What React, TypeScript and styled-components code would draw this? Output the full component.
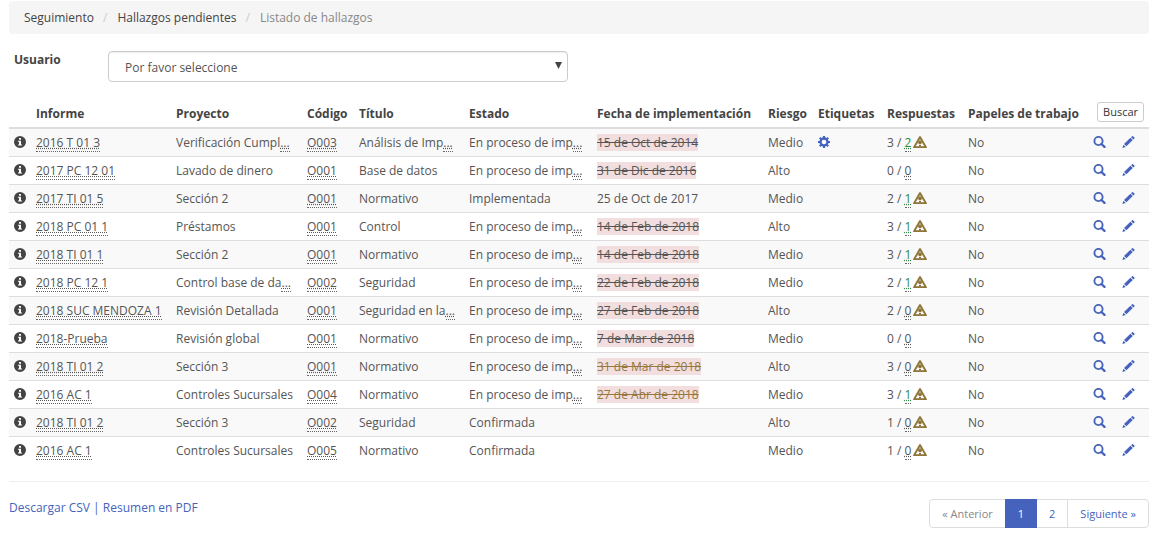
import React from 'react';
import styled, { createGlobalStyle } from 'styled-components';

const color = {
  text: '#555555',
  strong: '#444444',
  link: '#4563bc',
  line: '#dddddd',
  muted: '#888888',
  green: '#2b8a3e',
  warn: '#8d7437',
};

const GlobalStyle = createGlobalStyle`
  *, *::before, *::after { box-sizing: border-box; }
  body {
    margin: 0;
    background: #fff;
    color: ${color.text};
    font: 12px/18px 'Open Sans', 'Noto Sans', sans-serif;
  }
`;

const Page = styled.div`
  padding: 1px 8px 8px 9px;
`;

const Breadcrumb = styled.ol`
  display: flex;
  margin: 0 0 17px;
  padding: 8px 15px 7px;
  list-style: none;
  background: #f5f5f5;
  border-radius: 4px;
`;

const Crumb = styled.li<{ $current?: boolean }>`
  color: ${(p) => (p.$current ? color.muted : color.strong)};

  &:not(:first-child)::before {
    content: '/';
    padding: 0 10px 0 9px;
    color: #cccccc;
  }
`;

const CrumbLink = styled.a`
  color: inherit;
  text-decoration: none;
`;

const Filter = styled.form`
  display: grid;
  grid-template-columns: 94px minmax(200px, 460px);
  align-items: start;
  margin-bottom: 15px;
  padding-left: 5px;
`;

const FilterLabel = styled.label`
  color: ${color.strong};
  font-weight: 700;
`;

const SelectBox = styled.div`
  display: grid;
  align-items: center;

  & > * { grid-area: 1 / 1; }
  & > svg {
    justify-self: end;
    margin-right: 6px;
    margin-bottom: 2px;
    pointer-events: none;
  }
`;

const Select = styled.select`
  appearance: none;
  width: 100%;
  height: 31px;
  padding: 3px 16px 0;
  border: 1px solid #cccccc;
  border-radius: 4px;
  background: #fff;
  color: ${color.text};
  font: inherit;
  box-shadow: inset 0 1px 1px rgba(0, 0, 0, 0.07);
`;

const Table = styled.table`
  width: 100%;
  table-layout: fixed;
  border-collapse: separate;
  border-spacing: 0;
`;

const Head = styled.th`
  height: 32px;
  padding: 5px 0 4px 5px;
  border-bottom: 2px solid ${color.line};
  color: ${color.strong};
  font-weight: 700;
  text-align: left;
  vertical-align: bottom;
  white-space: nowrap;
`;

const ActionHead = styled(Head)`
  padding: 5px 5px 5px 0;
  text-align: right;
`;

const Row = styled.tr`
  &:nth-child(odd) { background: #f9f9f9; }
  &:last-child > td { border-bottom: 0; }
`;

const Cell = styled.td`
  height: 28px;
  padding: 5px 0 4px 5px;
  border-bottom: 1px solid ${color.line};
  vertical-align: top;
  white-space: nowrap;
`;

const Abbr = styled.abbr<{ $good?: boolean }>`
  color: ${(p) => (p.$good ? color.green : 'inherit')};
  border-bottom: 1px dotted #666666;
  text-decoration: underline dotted;
  cursor: help;
`;

const Overdue = styled.del<{ $warn?: boolean }>`
  background: #f2dede;
  color: ${(p) => (p.$warn ? '#967840' : color.text)};
`;

const SearchButton = styled.button`
  display: block;
  height: 20px;
  margin-left: auto;
  padding: 0 5px;
  border: 1px solid #cccccc;
  border-radius: 3px;
  background: #fff;
  color: #333333;
  font: 11px/16px 'Open Sans', 'Noto Sans', sans-serif;
`;

const IconLink = styled.a<{ $tone?: string }>`
  color: ${(p) => p.$tone || color.link};
`;

const Icon = styled.svg`
  display: inline-block;
  vertical-align: -1px;
  fill: currentColor;
`;

const WarningSvg = styled(Icon)`
  margin-left: 2px;
  color: ${color.warn};
`;

const Footer = styled.footer`
  display: flex;
  justify-content: space-between;
  align-items: flex-start;
  margin-top: 16px;
  padding-top: 17px;
  border-top: 1px solid #eeeeee;
  color: ${color.link};
`;

const TextLink = styled.a`
  color: ${color.link};
  text-decoration: none;
`;

const Pagination = styled.ul`
  display: flex;
  margin: 0;
  padding: 0;
  list-style: none;
  border: 1px solid ${color.line};
  border-radius: 4px;
  font-size: 11px;
`;

const PageItem = styled.li<{ $divided?: boolean }>`
  border-left: ${(p) => (p.$divided ? `1px solid ${color.line}` : '0')};
`;

const PageLink = styled.a<{ $active?: boolean; $disabled?: boolean }>`
  display: block;
  margin: ${(p) => (p.$active ? '-1px 0' : '0')};
  padding: ${(p) => (p.$active ? '6px 13px 5px' : '5px 12px 4px')};
  background: ${(p) => (p.$active ? color.link : 'transparent')};
  color: ${(p) => (p.$active ? '#fff' : p.$disabled ? color.muted : color.link)};
  text-decoration: none;
`;

const InfoIcon = () => (
  <Icon width="12" height="12" viewBox="0 0 12 12" aria-hidden="true">
    <path fillRule="evenodd" d="M6 0a6 6 0 1 1 0 12A6 6 0 0 1 6 0ZM5 2v1.7h2V2ZM4 4.7v1h1v2.8H4v1h4v-1H7V4.7Z" />
  </Icon>
);

const SearchIcon = () => (
  <Icon width="13" height="12" viewBox="0 0 13 12" aria-hidden="true">
    <circle cx="5.5" cy="5" r="4.1" fill="none" stroke="currentColor" strokeWidth="1.9" />
    <path d="m8.4 8 3.1 2.900" fill="none" stroke="currentColor" strokeWidth="2.300" strokeLinecap="round" />
  </Icon>
);

const PencilIcon = () => (
  <Icon width="13" height="12" viewBox="0 0 13 12" aria-hidden="true">
    <path d="m.4 12 1-3.300 2.300 2.200ZM2 8l6.400-6.200 2.400 2.300L4.400 10.300ZM9.100 1.200 10 .3q.5-.5 1 0l1.400 1.300q.5.5 0 1l-.9.900Z" />
  </Icon>
);

const CogIcon = () => (
  <Icon width="12" height="12" viewBox="0 0 12 12" aria-hidden="true">
    <circle cx="6" cy="6" r="3.5" fill="none" stroke="currentColor" strokeWidth="2.3" />
    {[0, 45, 90, 135].map((angle) => (
      <path key={angle} transform={`rotate(${angle} 6 6)`} d="M4.9 0h2.2v2.2H4.9ZM4.9 9.8h2.2V12H4.9Z" />
    ))}
  </Icon>
);

const WarningIcon = () => (
  <WarningSvg width="14" height="12" viewBox="0 0 14 12" role="img" aria-label="Advertencia">
    <path fillRule="evenodd" d="M7 0q.5 0 .8.6L14 11.3q0 .7-.6.7H.6q-.6 0-.6-.7L6.2.6Q6.5 0 7 0ZM7 2.900 2.700 10.200H11.300Z" />
    <path d="M5.700 4.500h2.600L9 7 7.800 8.200H6.200L5 7ZM6 9h2v1.600H6Z" />
  </WarningSvg>
);

const columnWidths = [22, 140, 131, 52, 110, 128, 171, 50, 69, 81, 125, 29, 32];
const headings = [
  'Informe', 'Proyecto', 'Código', 'Título', 'Estado', 'Fecha de implementación',
  'Riesgo', 'Etiquetas', 'Respuestas', 'Papeles de trabajo',
];

type Finding = {
  report: string;
  project: string;
  code: string;
  title: string;
  state: string;
  date?: string;
  dateKind?: 'late' | 'warn';
  risk: string;
  tagged?: boolean;
  answers: number;
  own: number;
};

const inProcess = 'En proceso de imp...';

const findings: Finding[] = [
  { report: '2016 T 01 3', project: 'Verificación Cumpl...', code: 'O003', title: 'Análisis de Imp...', state: inProcess, date: '15 de Oct de 2014', dateKind: 'late', risk: 'Medio', tagged: true, answers: 3, own: 2 },
  { report: '2017 PC 12 01', project: 'Lavado de dinero', code: 'O001', title: 'Base de datos', state: inProcess, date: '31 de Dic de 2016', dateKind: 'late', risk: 'Alto', answers: 0, own: 0 },
  { report: '2017 TI 01 5', project: 'Sección 2', code: 'O001', title: 'Normativo', state: 'Implementada', date: '25 de Oct de 2017', risk: 'Medio', answers: 2, own: 1 },
  { report: '2018 PC 01 1', project: 'Préstamos', code: 'O001', title: 'Control', state: inProcess, date: '14 de Feb de 2018', dateKind: 'late', risk: 'Alto', answers: 3, own: 1 },
  { report: '2018 TI 01 1', project: 'Sección 2', code: 'O001', title: 'Normativo', state: inProcess, date: '14 de Feb de 2018', dateKind: 'late', risk: 'Medio', answers: 3, own: 1 },
  { report: '2018 PC 12 1', project: 'Control base de da...', code: 'O002', title: 'Seguridad', state: inProcess, date: '22 de Feb de 2018', dateKind: 'late', risk: 'Medio', answers: 2, own: 1 },
  { report: '2018 SUC MENDOZA 1', project: 'Revisión Detallada', code: 'O001', title: 'Seguridad en la...', state: inProcess, date: '27 de Feb de 2018', dateKind: 'late', risk: 'Alto', answers: 2, own: 0 },
  { report: '2018-Prueba', project: 'Revisión global', code: 'O001', title: 'Normativo', state: inProcess, date: '7 de Mar de 2018', dateKind: 'late', risk: 'Medio', answers: 0, own: 0 },
  { report: '2018 TI 01 2', project: 'Sección 3', code: 'O001', title: 'Normativo', state: inProcess, date: '31 de Mar de 2018', dateKind: 'warn', risk: 'Alto', answers: 3, own: 0 },
  { report: '2016 AC 1', project: 'Controles Sucursales', code: 'O004', title: 'Normativo', state: inProcess, date: '27 de Abr de 2018', dateKind: 'warn', risk: 'Medio', answers: 3, own: 1 },
  { report: '2018 TI 01 2', project: 'Sección 3', code: 'O002', title: 'Seguridad', state: 'Confirmada', risk: 'Alto', answers: 1, own: 0 },
  { report: '2016 AC 1', project: 'Controles Sucursales', code: 'O005', title: 'Normativo', state: 'Confirmada', risk: 'Medio', answers: 1, own: 0 },
];

/* Shortened text keeps its ellipsis marked as an abbreviation. */
const Shortened = ({ text }: { text: string }) =>
  text.endsWith('...') ? (
    <>
      {text.slice(0, -3)}
      <Abbr>...</Abbr>
    </>
  ) : (
    <>{text}</>
  );

const FindingRow = ({ item }: { item: Finding }) => (
  <Row>
    <Cell>
      <IconLink href="#" $tone={color.strong} aria-label="Información"><InfoIcon /></IconLink>
    </Cell>
    <Cell><Abbr>{item.report}</Abbr></Cell>
    <Cell><Shortened text={item.project} /></Cell>
    <Cell><Abbr>{item.code}</Abbr></Cell>
    <Cell><Shortened text={item.title} /></Cell>
    <Cell><Shortened text={item.state} /></Cell>
    <Cell>
      {item.dateKind ? <Overdue $warn={item.dateKind === 'warn'}>{item.date}</Overdue> : item.date}
    </Cell>
    <Cell>{item.risk}</Cell>
    <Cell>
      {item.tagged && <IconLink href="#" aria-label="Etiqueta"><CogIcon /></IconLink>}
    </Cell>
    <Cell>
      {item.answers} / <Abbr $good={item.own > 0}>{item.own}</Abbr>
      {item.answers > 0 && <WarningIcon />}
    </Cell>
    <Cell>No</Cell>
    <Cell><IconLink href="#" aria-label="Ver"><SearchIcon /></IconLink></Cell>
    <Cell><IconLink href="#" aria-label="Editar"><PencilIcon /></IconLink></Cell>
  </Row>
);

export default function App() {
  return (
    <>
      <GlobalStyle />
      <Page>
        <nav>
          <Breadcrumb>
            <Crumb><CrumbLink href="#">Seguimiento</CrumbLink></Crumb>
            <Crumb><CrumbLink href="#">Hallazgos pendientes</CrumbLink></Crumb>
            <Crumb $current>Listado de hallazgos</Crumb>
          </Breadcrumb>
        </nav>

        <Filter>
          <FilterLabel htmlFor="user">Usuario</FilterLabel>
          <SelectBox>
            <Select id="user">
              <option>Por favor seleccione</option>
            </Select>
            <svg width="7" height="7" viewBox="0 0 7 7" aria-hidden="true">
              <path d="M0 0h7L3.5 7Z" fill="#444" />
            </svg>
          </SelectBox>
        </Filter>

        <Table>
          <colgroup>
            {columnWidths.map((width, i) => <col key={i} width={width} />)}
          </colgroup>
          <thead>
            <tr>
              <Head />
              {headings.map((heading) => <Head key={heading} scope="col">{heading}</Head>)}
              <ActionHead colSpan={2}><SearchButton type="button">Buscar</SearchButton></ActionHead>
            </tr>
          </thead>
          <tbody>
            {findings.map((item, i) => <FindingRow key={i} item={item} />)}
          </tbody>
        </Table>

        <Footer>
          <div>
            <TextLink href="#">Descargar CSV</TextLink> | <TextLink href="#">Resumen en PDF</TextLink>
          </div>
          <Pagination>
            <PageItem><PageLink $disabled aria-disabled="true">« Anterior</PageLink></PageItem>
            <PageItem><PageLink href="#" $active aria-current="page">1</PageLink></PageItem>
            <PageItem><PageLink href="#">2</PageLink></PageItem>
            <PageItem $divided><PageLink href="#">Siguiente »</PageLink></PageItem>
          </Pagination>
        </Footer>
      </Page>
    </>
  );
}
